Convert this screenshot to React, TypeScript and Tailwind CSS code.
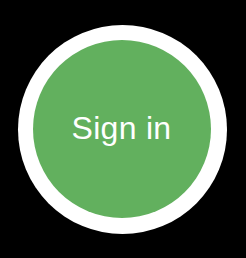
export default function App() {
  return (
    <div className="flex h-[258px] w-[246px] items-center justify-center bg-black pr-[2px]">
      <div className="h-[209px] w-[209px] rounded-full bg-white p-[15.5px]">
        <button
          type="button"
          className="flex h-full w-full items-center justify-center rounded-full bg-[#62b05e] font-['Liberation_Sans',Arial,sans-serif] text-[32px] leading-none tracking-[0.3px] text-white"
        >
          <span className="pb-[2px] pr-[1px]">Sign in</span>
        </button>
      </div>
    </div>
  )
}
